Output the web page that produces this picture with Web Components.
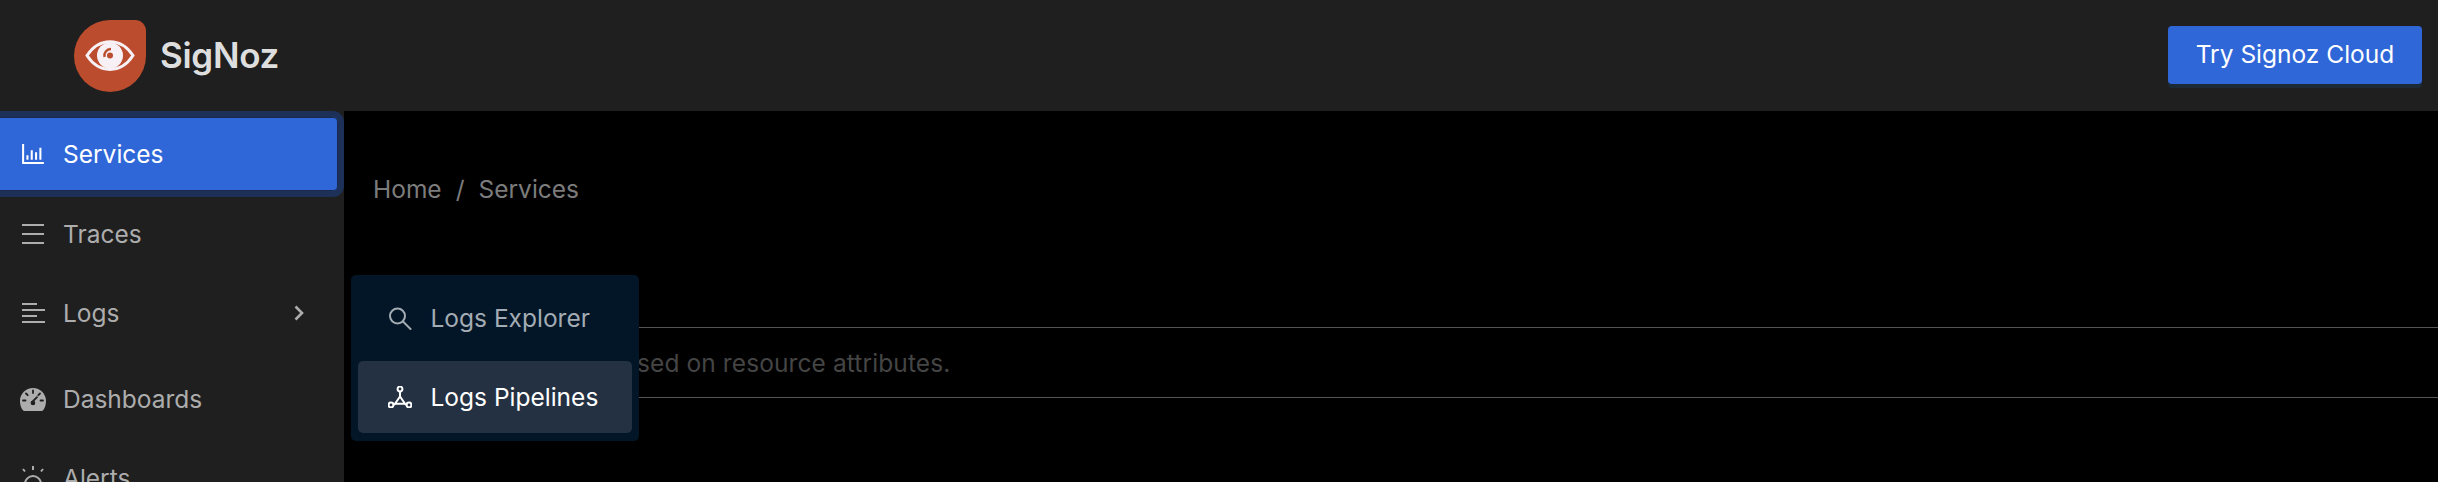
<!DOCTYPE html>
<html>
<head>
<meta charset="utf-8">
<title>SigNoz</title>
<style>
  html, body { margin: 0; height: 100%; background: #000; overflow: hidden; }
  body { font-family: Inter, "Liberation Sans", sans-serif; }
</style>
</head>
<body>
<sn-app>
  <sn-header slot="header"></sn-header>
  <sn-sider slot="sider">
    <sn-menu-item label="Services" icon="services" selected style="margin-top:6px"></sn-menu-item>
    <sn-menu-item label="Traces" icon="traces" style="margin-top:6px"></sn-menu-item>
    <sn-menu-item label="Logs" icon="logs" arrow style="margin-top:5px"></sn-menu-item>
    <sn-menu-item label="Dashboards" icon="dashboards" style="margin-top:12px"></sn-menu-item>
    <sn-menu-item label="Alerts" icon="alerts" style="margin-top:5px"></sn-menu-item>
  </sn-sider>
  <sn-content slot="content"></sn-content>
</sn-app>

<script>
const icons = {
  services: `<svg viewBox="128 160 768 704" width="22" height="20" fill="currentColor"><path d="M888 792H200V168c0-4.400-3.600-8-8-8h-56c-4.400 0-8 3.600-8 8v688c0 4.400 3.600 8 8 8h752c4.400 0 8-3.600 8-8v-56c0-4.400-3.600-8-8-8zm-600-80h56c4.400 0 8-3.600 8-8V560c0-4.400-3.600-8-8-8h-56c-4.400 0-8 3.600-8 8v144c0 4.400 3.600 8 8 8zm152 0h56c4.400 0 8-3.600 8-8V384c0-4.400-3.600-8-8-8h-56c-4.400 0-8 3.600-8 8v320c0 4.400 3.600 8 8 8zm152 0h56c4.400 0 8-3.600 8-8V462c0-4.400-3.600-8-8-8h-56c-4.400 0-8 3.600-8 8v242c0 4.400 3.600 8 8 8zm152 0h56c4.400 0 8-3.600 8-8V304c0-4.400-3.600-8-8-8h-56c-4.400 0-8 3.600-8 8v400c0 4.400 3.600 8 8 8z"/></svg>`,
  traces: `<svg viewBox="0 0 24 22" width="24" height="22" fill="currentColor"><rect x="1" y="1" width="22" height="2"/><rect x="1" y="10" width="22" height="2"/><rect x="1" y="19" width="22" height="2"/></svg>`,
  logs: `<svg viewBox="0 0 24 22" width="24" height="22" fill="currentColor"><rect x="1" y="1" width="15" height="2"/><rect x="1" y="7" width="23" height="2"/><rect x="1" y="13" width="15" height="2"/><rect x="1" y="19" width="23" height="2"/></svg>`,
  dashboards: `<svg viewBox="0 0 26 23" width="26" height="23"><path fill="currentColor" d="M13 0C5.800 0 0 5.800 0 13c0 3.600 1.100 7 2.900 9.300.3.400.8.700 1.300.700h17.600c.5 0 1-.3 1.300-.7C24.900 20 26 16.600 26 13 26 5.800 20.200 0 13 0z"/><g stroke="#1f1f1f" stroke-width="1.800" fill="none" stroke-linecap="round"><path d="M13 2.500v2.500M6 5.500l1.700 1.700M3 12.500h2.500M20.500 12.500H23M20 5.500l-1.700 1.700M11.700 14.500l5.300-5.300" /></g><circle cx="13" cy="15" r="2.300" fill="#1f1f1f"/></svg>`,
  alerts: `<svg viewBox="0 0 24 24" width="24" height="24" fill="none" stroke="currentColor" stroke-width="2"><path d="M12 0v4M2 3l2 2.500M22 3l-2 2.500"/><path d="M4 24v-6a8 8 0 0 1 16 0v6"/></svg>`,
  search: `<svg viewBox="0 0 23 23" width="23" height="23" fill="none" stroke="currentColor" stroke-width="2"><circle cx="8.500" cy="9" r="7.500"/><path d="M14 14.500l7.500 7.500" stroke-linecap="round"/></svg>`,
  pipelines: `<svg viewBox="0 0 24 22" width="24" height="22" fill="none" stroke="currentColor" stroke-width="2"><circle cx="12" cy="3" r="2.400"/><circle cx="3" cy="19" r="2.400"/><circle cx="21" cy="19" r="2.400"/><path d="M12 5.300v5"/><path d="M5.300 18.800l2.200-1M18.700 18.800l-2.200-1"/><path d="M12 10.500l-5 7.300h10z"/></svg>`
};

class SnApp extends HTMLElement {
  constructor() {
    super();
    this.attachShadow({mode: 'open'}).innerHTML = `
      <style>
        :host { display: grid; grid-template-columns: 344px 1fr; grid-template-rows: 111px 1fr; height: 482px; overflow: hidden; background: #000; }
        ::slotted([slot=header]) { grid-column: 1 / 3; }
      </style>
      <slot name="header"></slot>
      <slot name="sider"></slot>
      <slot name="content"></slot>`;
  }
}

class SnLogo extends HTMLElement {
  constructor() {
    super();
    this.attachShadow({mode: 'open'}).innerHTML = `
      <style>
        :host { display: flex; align-items: center; gap: 14px; color: #dedede; font-size: 35px; font-weight: 600; letter-spacing: -0.3px; }
        svg { display: block; }
        span { padding-bottom: 2px; }
      </style>
      <svg width="72" height="72" viewBox="0 0 72 72">
        <path fill="#bc4c2e" d="M36 0H61a11 11 0 0 1 11 11V36A36 36 0 1 1 36 0Z"/>
        <path fill="none" stroke="#f7f1f6" stroke-width="3" d="M13 35.500C25 17 47 17 59 35.500 47 54 25 54 13 35.500Z"/>
        <circle cx="36" cy="35.500" r="13" fill="#f7f1f6"/>
        <circle cx="36" cy="35.500" r="3" fill="#bc4c2e"/>
        <path fill="none" stroke="#bc4c2e" stroke-width="2.400" d="M30.500 37a6.500 6.500 0 0 1 6.500-8"/>
      </svg>
      <span>SigNoz</span>`;
  }
}

class SnHeader extends HTMLElement {
  constructor() {
    super();
    this.attachShadow({mode: 'open'}).innerHTML = `
      <style>
        :host { display: flex; align-items: center; justify-content: space-between; background: #1f1f1f; padding: 0 16px 0 74px; }
        button { width: 254px; height: 58px; margin-top: -2px; border: 0; border-radius: 4px; background: #3067d8; color: #fff; font: 24.5px Inter, "Liberation Sans", sans-serif; box-shadow: 0 4px 0 rgba(5,145,255,.1); padding: 0 0 2px; }
      </style>
      <sn-logo></sn-logo>
      <button>Try Signoz Cloud</button>`;
  }
}

class SnSider extends HTMLElement {
  constructor() {
    super();
    this.attachShadow({mode: 'open'}).innerHTML = `
      <style>
        :host { display: flex; flex-direction: column; background: #1f1f1f; overflow: hidden; min-height: 0; }
      </style>
      <slot></slot>`;
  }
}

class SnMenuItem extends HTMLElement {
  connectedCallback() {
    const label = this.getAttribute('label');
    const icon = icons[this.getAttribute('icon')];
    const arrow = this.hasAttribute('arrow') ? `
      <svg class="arrow" width="10" height="16" viewBox="0 0 10 16" fill="none" stroke="currentColor" stroke-width="2.600"><path d="M1.500 1.500L8 8l-6.500 6.500"/></svg>` : '';
    this.attachShadow({mode: 'open'}).innerHTML = `
      <style>
        :host { display: flex; flex: none; align-items: center; height: 74px; width: 338px; padding-left: 20px; box-sizing: border-box; border-radius: 0 5px 5px 0; color: #adadad; font-size: 24.5px; }
        :host([selected]) { width: 348px; margin-left: -10px; padding-left: 30px; background: #3067d8; color: #fff; box-shadow: inset 0 0 0 1px #1a2a4c, 0 0 0 6px #1d3057; }
        .icon { display: flex; width: 26px; margin-right: 17px; justify-content: center; }
        .label { flex: 1; }
        .arrow { margin-right: 34px; }
      </style>
      <span class="icon">${icon}</span>
      <span class="label">${label}</span>${arrow}`;
  }
}

class SnPopupItem extends HTMLElement {
  connectedCallback() {
    this.attachShadow({mode: 'open'}).innerHTML = `
      <style>
        :host { display: flex; align-items: center; height: 72px; padding-left: 30px; border-radius: 5px; color: #a3abb3; font-size: 24.5px; }
        :host([active]) { background: #243142; color: #fff; }
        .icon { display: flex; width: 24px; margin-right: 18.500px; justify-content: center; }
      </style>
      <span class="icon">${icons[this.getAttribute('icon')]}</span>
      <span>${this.getAttribute('label')}</span>`;
  }
}

class SnPopup extends HTMLElement {
  constructor() {
    super();
    this.attachShadow({mode: 'open'}).innerHTML = `
      <style>
        :host { position: absolute; left: 7px; top: 164px; width: 288px; box-sizing: border-box; padding: 7px 7px 8px; display: flex; flex-direction: column; gap: 7px; background: #021627; border-radius: 5px; }
      </style>
      <slot></slot>`;
  }
}

class SnContent extends HTMLElement {
  constructor() {
    super();
    this.attachShadow({mode: 'open'}).innerHTML = `
      <style>
        :host { display: block; position: relative; padding: 60px 0 0 29px; min-height: 0; overflow: hidden; }
        .crumb { display: flex; gap: 14px; height: 36px; align-items: center; color: #7c7c7c; font-size: 24.5px; }
        .filter { margin-top: 120px; height: 69px; display: flex; align-items: center; padding-left: 264px; border-top: 1px solid #555; border-bottom: 1px solid #555; color: #454545; font-size: 24.5px; letter-spacing: .1px; }
      </style>
      <div class="crumb"><span>Home</span><span>/</span><span>Services</span></div>
      <div class="filter">sed on resource attributes.</div>
      <sn-popup>
        <sn-popup-item label="Logs Explorer" icon="search"></sn-popup-item>
        <sn-popup-item label="Logs Pipelines" icon="pipelines" active></sn-popup-item>
      </sn-popup>`;
  }
}

customElements.define('sn-app', SnApp);
customElements.define('sn-logo', SnLogo);
customElements.define('sn-header', SnHeader);
customElements.define('sn-sider', SnSider);
customElements.define('sn-menu-item', SnMenuItem);
customElements.define('sn-popup-item', SnPopupItem);
customElements.define('sn-popup', SnPopup);
customElements.define('sn-content', SnContent);
</script>
</body>
</html>
